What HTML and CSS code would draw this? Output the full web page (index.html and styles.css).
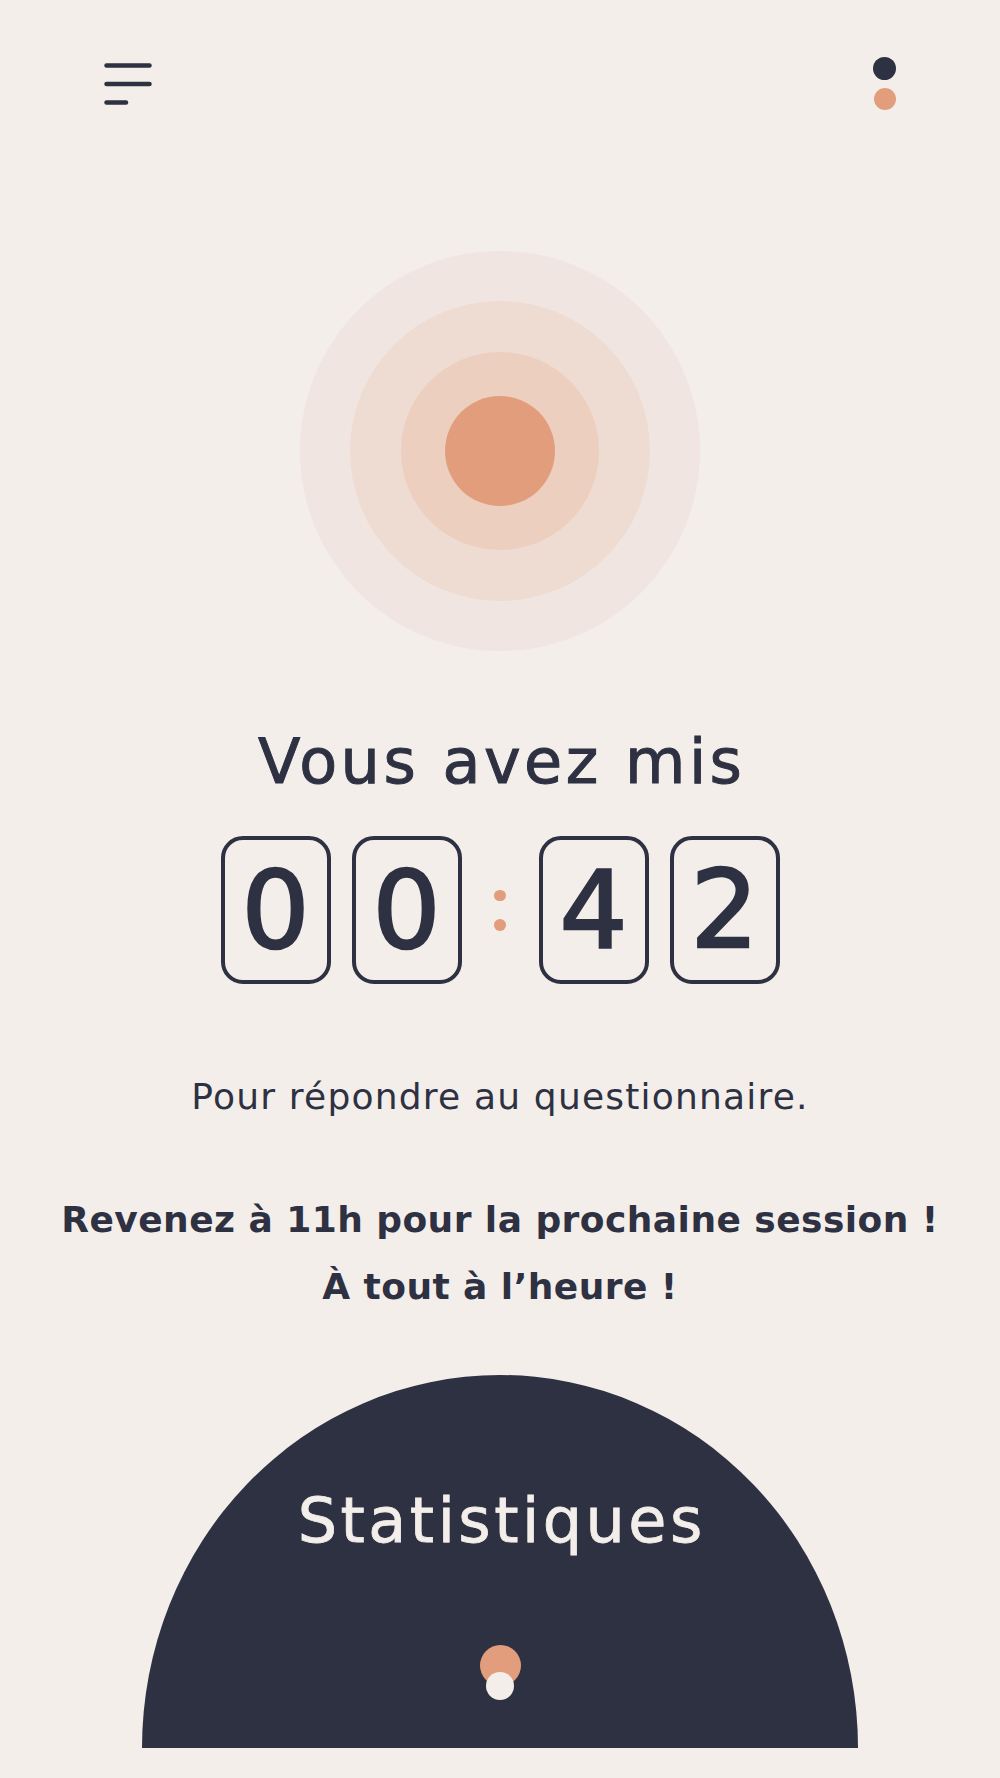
FILE: index.html
```html
<!DOCTYPE html>
<html lang="fr">
<head>
  <meta charset="UTF-8" />
  <meta name="viewport" content="width=device-width, initial-scale=1.0"/>
  <title>Session terminée</title>
  <link rel="stylesheet" href="styles.css">
</head>
<body>

  <div class="screen">
    <header class="topbar">
      <svg class="menu" width="48" height="44" viewBox="0 0 48 44">
        <line x1="2.5" y1="2.5" x2="45.5" y2="2.5" />
        <line x1="2.5" y1="21" x2="45.5" y2="21" />
        <line x1="2.5" y1="39.5" x2="22" y2="39.5" />
      </svg>
      <div class="dots">
        <span class="dot dark"></span>
        <span class="dot orange"></span>
      </div>
    </header>

    <div class="pulse">
      <div class="ring ring-1">
        <div class="ring ring-2">
          <div class="ring ring-3">
            <div class="core"></div>
          </div>
        </div>
      </div>
    </div>

    <h1 class="title">Vous avez mis</h1>

    <div class="timer">
      <div class="digit">0</div>
      <div class="digit">0</div>
      <div class="colon"><span></span><span></span></div>
      <div class="digit">4</div>
      <div class="digit">2</div>
    </div>

    <p class="subtitle">Pour répondre au questionnaire.</p>

    <p class="next">Revenez à 11h pour la prochaine session !<br>À tout à l’heure !</p>

    <div class="stats">
      <h2>Statistiques</h2>
      <div class="toggle">
        <span class="knob"></span>
        <span class="handle"></span>
      </div>
    </div>
  </div>

</body>
</html>
```

FILE: styles.css
```css
body {
  margin: 0;
  background: #f3eeea;
  color: #2e3142;
  font-family: 'DejaVu Sans', 'Liberation Sans', sans-serif;
}
.screen {
  width: 1000px;
  height: 1778px;
  overflow: hidden;
  display: flex;
  flex-direction: column;
  align-items: center;
}
.topbar {
  align-self: stretch;
  display: flex;
  justify-content: space-between;
  align-items: flex-start;
  padding: 57px 104px 0 104px;
}
.menu {
  margin-top: 6px;
  stroke: #2e3142;
  stroke-width: 4.5;
  stroke-linecap: round;
}
.dots {
  display: flex;
  flex-direction: column;
  align-items: center;
  gap: 8px;
}
.dot {
  display: block;
  width: 23px;
  height: 23px;
  border-radius: 50%;
}
.dot.dark {
  background: #2e3142;
}
.dot.orange {
  width: 22px;
  height: 22px;
  background: #e29e7c;
}
.pulse {
  margin-top: 141px;
}
.ring, .core {
  border-radius: 50%;
  display: flex;
  align-items: center;
  justify-content: center;
}
.ring-1 {
  width: 400px;
  height: 400px;
  background: #f0e5e0;
}
.ring-2 {
  width: 300px;
  height: 300px;
  background: #eedbd2;
}
.ring-3 {
  width: 198px;
  height: 198px;
  background: #edcfc0;
}
.core {
  width: 110px;
  height: 110px;
  background: #e29e7c;
}
.title {
  margin: 80px 0 0 0;
  font-size: 62px;
  line-height: 62px;
  font-weight: normal;
  letter-spacing: 3.5px;
  padding-left: 3.5px;
  -webkit-text-stroke: 1px #2e3142;
}
.timer {
  margin-top: 43px;
  display: flex;
  gap: 21px;
}
.digit {
  box-sizing: border-box;
  width: 110px;
  height: 148px;
  border: 4px solid #2e3142;
  border-radius: 22px;
  display: flex;
  align-items: center;
  justify-content: center;
  font-size: 107px;
  line-height: 1;
  -webkit-text-stroke: 2.5px #2e3142;
}
.colon {
  width: 35px;
  display: flex;
  flex-direction: column;
  align-items: center;
  justify-content: center;
  gap: 18px;
}
.colon span {
  display: block;
  width: 11.5px;
  height: 11.5px;
  border-radius: 50%;
  background: #e29e7c;
}
.subtitle {
  margin: 95px 0 0 0;
  font-size: 36px;
  line-height: 36px;
  letter-spacing: 1.2px;
}
.next {
  margin: 71px 0 0 0;
  font-size: 36px;
  line-height: 67px;
  font-weight: bold;
  letter-spacing: 0.45px;
  text-align: center;
}
.stats {
  margin-top: 55px;
  width: 716px;
  height: 373px;
  box-sizing: border-box;
  padding-top: 115px;
  background: #2e3142;
  border-radius: 50% 50% 0 0 / 100% 100% 0 0;
  display: flex;
  flex-direction: column;
  align-items: center;
  color: #f3eeea;
}
.stats h2 {
  margin: 0;
  font-size: 62px;
  line-height: 62px;
  font-weight: normal;
  letter-spacing: 3.5px;
  padding-left: 3.5px;
  -webkit-text-stroke: 0.8px #f3eeea;
}
.toggle {
  margin-top: 93px;
  display: flex;
  flex-direction: column;
  align-items: center;
}
.knob {
  display: block;
  width: 41px;
  height: 41px;
  border-radius: 50%;
  background: #e29e7c;
}
.handle {
  display: block;
  width: 28px;
  height: 28px;
  margin-top: -14px;
  border-radius: 50%;
  background: #f3eeea;
}
```
